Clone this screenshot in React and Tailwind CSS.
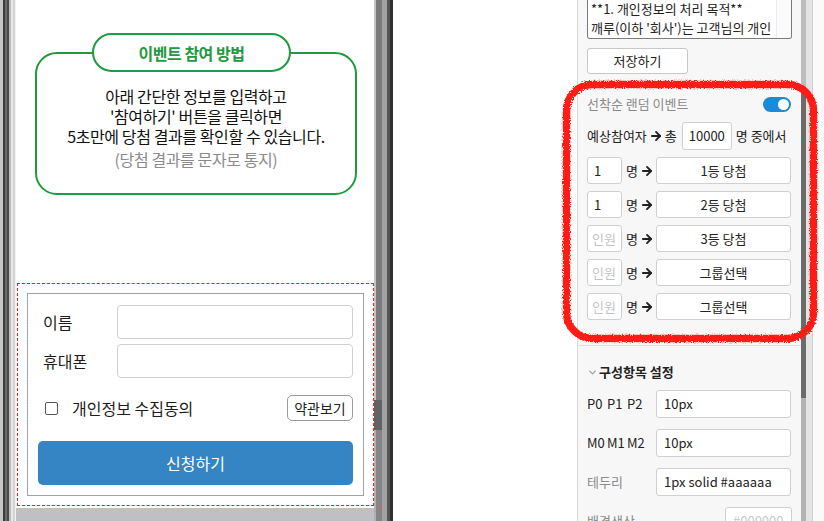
import React from 'react';
import { ChevronDown, ArrowRight } from 'lucide-react';

const prizeRows = [
  { count: '1', label: '1등 당첨' },
  { count: '1', label: '2등 당첨' },
  { count: '', label: '3등 당첨' },
  { count: '', label: '그룹선택' },
  { count: '', label: '그룹선택' },
];

const PhoneFrameLeft = () => (
  <div className="flex h-full w-[16px] shrink-0">
    <div className="w-[3px] bg-[#c8c8c8]" />
    <div className="w-[2px] bg-[#3c3c3c]" />
    <div className="w-[2px] bg-[#6c6c6c]" />
    <div className="w-[2px] bg-[#4a4a4a]" />
    <div className="w-[2px] bg-[#bcbcbc]" />
    <div className="w-[2px] bg-[#e8e8e8]" />
    <div className="w-[2px] bg-[#d4d4d4]" />
    <div className="w-[1px] bg-[#f2f2f2]" />
  </div>
);

const PhoneFrameRight = () => (
  <div className="flex h-full w-[19px] shrink-0">
    {/* scroll track with thumb */}
    <div className="flex w-[8px] flex-col">
      <div className="flex h-[400px]">
        <div className="w-[2px] bg-[#c4c4c4]" />
        <div className="flex-1 bg-[#7a7a7a]" />
      </div>
      <div className="h-[30px] bg-[#626262]" />
      <div className="flex flex-1">
        <div className="w-[2px] bg-[#b0b0b0]" />
        <div className="flex-1 bg-[#858585]" />
      </div>
    </div>
    <div className="w-[5px] bg-[#a2a2a2]" />
    <div className="w-[3px] bg-[#555555]" />
    <div className="w-[3px] bg-[#303030]" />
  </div>
);

const EventGuide = () => (
  <div className="flex flex-col">
    <div className="relative z-10 ml-[76px] flex h-[39px] w-[199px] items-center justify-center rounded-full border-[2.5px] border-[#1f9a3f] bg-white text-[16px] font-bold tracking-[-0.5px] text-[#1f9a3f]">
      이벤트 참여 방법
    </div>
    <div className="ml-[19px] -mt-[20px] w-[322px] rounded-[22px] border-[2.5px] border-[#1f9a3f] pt-[32px] pb-[24px] text-center text-[16px] leading-[20px] tracking-[-0.4px] text-[#111]">
      <p>아래 간단한 정보를 입력하고</p>
      <p>'참여하기' 버튼을 클릭하면</p>
      <p>5초만에 당첨 결과를 확인할 수 있습니다.</p>
      <p className="mt-[3px] text-[#8a8a8a]">(당첨 결과를 문자로 통지)</p>
    </div>
  </div>
);

const ApplyForm = () => (
  <div className="mt-[88px] ml-[1px] p-[9px] [border:1px_dashed_#ff1a1a]">
    <div className="border border-[#a3a3a3] px-[10px] pt-[11px] pb-[10px]">
      <div className="flex h-[34px] items-center">
        <span className="w-[79px] pl-[5px] text-[16px] text-[#1c1c1c]">이름</span>
        <div className="h-[34px] flex-1 rounded-[4px] border border-[#cfcfd6] bg-white" />
      </div>
      <div className="mt-[5px] flex h-[34px] items-center">
        <span className="w-[79px] pl-[5px] text-[16px] text-[#1c1c1c]">휴대폰</span>
        <div className="h-[34px] flex-1 rounded-[4px] border border-[#cfcfd6] bg-white" />
      </div>
      <div className="mt-[17px] flex h-[26px] items-center">
        <div className="ml-[7px] h-[13px] w-[13px] rounded-[2px] border border-[#555]" />
        <span className="ml-[14px] text-[16px] text-[#1c1c1c]">개인정보 수집동의</span>
        <button className="ml-auto flex h-[26px] w-[66px] items-center justify-center rounded-[5px] border border-[#9a9a9a] bg-white text-[14px] text-[#222]">
          약관보기
        </button>
      </div>
      <button className="mt-[20px] flex h-[44px] w-full items-center justify-center rounded-[5px] bg-[#3584c4] text-[16px] text-white">
        신청하기
      </button>
    </div>
  </div>
);

const Toggle = () => (
  <div className="flex h-[15px] w-[28px] items-center justify-end rounded-full bg-[#1b8ad8] pr-[2px]">
    <div className="h-[11px] w-[11px] rounded-full bg-white" />
  </div>
);

const SettingRow = ({ label, value, muted, short }) => (
  <div className="flex h-[28px] items-center">
    <div className={`w-[69px] ${muted ? 'text-[#8a8a8a]' : 'text-[#222]'}`}>{label}</div>
    {short ? (
      <div className="ml-auto flex h-[28px] w-[67px] items-center rounded-[3px] border border-[#cfcfd6] bg-white pl-[7px] text-[#c8c8c8]">
        {value}
      </div>
    ) : (
      <div className="flex h-[28px] w-[135px] items-center rounded-[3px] border border-[#cfcfd6] bg-white pl-[7px]">
        {value}
      </div>
    )}
  </div>
);

const SidePanel = () => (
  <div className="flex w-[224px] shrink-0 flex-col border-l border-[#d9d9d9] bg-[#f7f7f7] text-[13px] text-[#222]">
    <div className="pl-[9px] pr-[9px]">
      {/* textarea (scrolled) */}
      <div className="flex h-[39px] overflow-hidden rounded-b-[3px] border border-t-0 border-[#7a7a7a] bg-white">
        <div className="-mt-[1px] flex-1 pl-[3px] leading-[19px] whitespace-nowrap">
          <p>**1. 개인정보의 처리 목적**</p>
          <p>깨루(이하 '회사')는 고객님의 개인</p>
        </div>
        <div className="w-[15px] shrink-0 border-l border-[#ececec] bg-[#fbfbfb]" />
      </div>
      <button className="mt-[9px] flex h-[26px] w-[101px] items-center justify-center rounded-[3px] border border-[#c8c8c8] bg-white">
        저장하기
      </button>
    </div>

    {/* 선착순 랜덤 이벤트 */}
    <div className="mt-[20px] border-b border-[#dedede] pb-[25px] pl-[9px] pr-[10px]">
      <div className="flex h-[20px] items-center justify-between">
        <span className="text-[#8a8a8a]">선착순 랜덤 이벤트</span>
        <Toggle />
      </div>
      <div className="mt-[8px] flex h-[28px] items-center">
        <span className="flex items-center">
          예상참여자
          <ArrowRight size={14} strokeWidth={3.2} className="mx-[2px]" />총
        </span>
        <div className="ml-[5px] flex h-[28px] w-[50px] items-center justify-center rounded-[3px] border border-[#cfcfd6] bg-white">
          10000
        </div>
        <span className="ml-[4px]">명 중에서</span>
      </div>
      <div className="mt-[7px] flex flex-col gap-[7px]">
        {prizeRows.map((row, i) => (
          <div key={i} className="flex h-[27px] items-center">
            <div className="flex h-[27px] w-[35px] items-center rounded-[3px] border border-[#cfcfd6] bg-white pl-[6px]">
              {row.count ? row.count : <span className="-ml-[2px] text-[#c4c4c4]">인원</span>}
            </div>
            <span className="ml-[4px] flex items-center">
              명
              <ArrowRight size={14} strokeWidth={3.2} className="ml-[2px]" />
            </span>
            <div className="ml-auto flex h-[27px] w-[135px] items-center justify-center rounded-[3px] border border-[#cfcfd6] bg-white">
              {row.label}
            </div>
          </div>
        ))}
      </div>
    </div>

    {/* 구성항목 설정 */}
    <div className="pt-[16px] pl-[9px] pr-[9px]">
      <div className="flex h-[20px] items-center">
        <ChevronDown size={11} strokeWidth={3} className="text-[#a0a0a0]" />
        <span className="ml-[1px] font-bold">구성항목 설정</span>
      </div>
      <div className="mt-[8px] flex flex-col gap-[11px]">
        <SettingRow
          label={
            <div className="grid grid-cols-[20px_20px_20px]">
              <span>P0</span>
              <span>P1</span>
              <span>P2</span>
            </div>
          }
          value="10px"
        />
        <SettingRow
          label={
            <div className="grid grid-cols-[20px_20px_20px]">
              <span>M0</span>
              <span>M1</span>
              <span>M2</span>
            </div>
          }
          value="10px"
        />
        <SettingRow label="테두리" value="1px solid #aaaaaa" muted />
        <SettingRow label="배경색상" value="#000000" muted short />
      </div>
    </div>
  </div>
);

const Scribble = () => (
  <svg
    className="pointer-events-none absolute left-[558px] top-[77px]"
    width="266"
    height="272"
    viewBox="0 0 266 272"
  >
    <defs>
      <filter id="crayon" x="-5%" y="-5%" width="110%" height="110%">
        <feTurbulence type="fractalNoise" baseFrequency="0.9" numOctaves="2" seed="3" result="noise" />
        <feDisplacementMap in="SourceGraphic" in2="noise" scale="4" />
      </filter>
    </defs>
    <rect
      x="8.5"
      y="7.5"
      width="247"
      height="254"
      rx="26"
      fill="none"
      stroke="#ff1e16"
      strokeWidth="7.5"
      filter="url(#crayon)"
    />
  </svg>
);

export default function App() {
  return (
    <div className="relative flex h-[521px] w-[824px] overflow-hidden bg-white font-['Noto_Sans_CJK_KR','Noto_Sans',sans-serif]">
      {/* phone preview */}
      <div className="flex h-full w-[393px] shrink-0">
        <PhoneFrameLeft />
        <div className="flex w-[358px] shrink-0 flex-col">
          <div className="h-[508px] bg-white pt-[33px]">
            <EventGuide />
            <ApplyForm />
          </div>
          <div className="flex-1 bg-[#bfc0c3]" />
        </div>
        <PhoneFrameRight />
      </div>

      <div className="w-[184px] shrink-0 bg-white" />

      <SidePanel />

      {/* outer scrollbar */}
      <div className="flex w-[5px] shrink-0 flex-col">
        <div className="h-[88px] bg-[#bdbdbd]" />
        <div className="h-[310px] bg-[#6b6b6b]" />
        <div className="flex-1 bg-[#b3b3b3]" />
      </div>
      <div className="w-[6px] shrink-0 bg-[#e4e4e4]" />
      <div className="w-[1px] shrink-0 bg-[#cfcfcf]" />
      <div className="flex-1 bg-[#fafafa]" />

      <Scribble />
    </div>
  );
}
